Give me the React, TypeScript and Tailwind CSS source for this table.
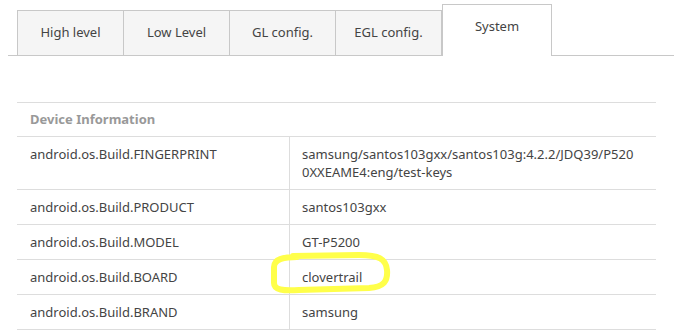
const tabs = ['High level', 'Low Level', 'GL config.', 'EGL config.', 'System'];

const rows: [string, string][] = [
  ['android.os.Build.FINGERPRINT', 'samsung/santos103gxx/santos103g:4.2.2/JDQ39/P5200XXEAME4:eng/test-keys'],
  ['android.os.Build.PRODUCT', 'santos103gxx'],
  ['android.os.Build.MODEL', 'GT-P5200'],
  ['android.os.Build.BOARD', 'clovertrail'],
  ['android.os.Build.BRAND', 'samsung'],
];

export default function App() {
  return (
    <div
      className="w-[674px] h-[332px] overflow-hidden bg-white text-[13px] text-[#444]"
      style={{ fontFamily: '"Noto Sans", "Open Sans", sans-serif' }}
    >
      {/* Tabs */}
      <div className="ml-2 mt-1 flex items-end border-b border-[#c8c8c8] pl-[9px]">
        {tabs.map((t) => {
          const active = t === 'System';
          return active ? (
            <div
              key={t}
              className="-mb-px flex h-[52px] w-[110px] justify-center border border-b-0 border-[#c8c8c8] bg-white pt-[12px] leading-[18px]"
            >
              {t}
            </div>
          ) : (
            <div
              key={t}
              className="-ml-px flex h-[45px] w-[107px] items-center justify-center border border-b-0 border-[#c8c8c8] bg-[#f5f5f5] first:ml-0"
            >
              {t}
            </div>
          );
        })}
      </div>

      {/* Device info table */}
      <div className="mt-[46px] ml-[17px] w-[639px] border-t border-[#ddd]">
        <div className="border-b border-[#ddd] px-[13px] py-[8px] font-bold leading-[17px] text-[#999]">
          Device Information
        </div>
        {rows.map(([k, v]) => (
          <div key={k} className="flex border-b border-[#ddd] leading-[18px]">
            <div className="w-[273px] shrink-0 border-r border-[#ddd] px-[13px] py-[8px]">{k}</div>
            <div className="relative py-[8px] pl-[12px] pr-[17px] break-all">
              {v}
              {v === 'clovertrail' && (
                <svg
                  className="pointer-events-none absolute left-[-19px] top-[-8px]"
                  width="124"
                  height="44"
                  viewBox="0 0 124 44"
                  fill="none"
                >
                  <path
                    d="M26 5 C12 5 3 7 3 15 L3 31 C3 38 12 39 28 38 L98 36 C113 35 117 29 116 18 C115 7 108 3 88 3 L22 4"
                    stroke="#ffff4a"
                    strokeWidth="6"
                    strokeLinecap="round"
                    strokeLinejoin="round"
                  />
                </svg>
              )}
            </div>
          </div>
        ))}
      </div>
    </div>
  );
}
